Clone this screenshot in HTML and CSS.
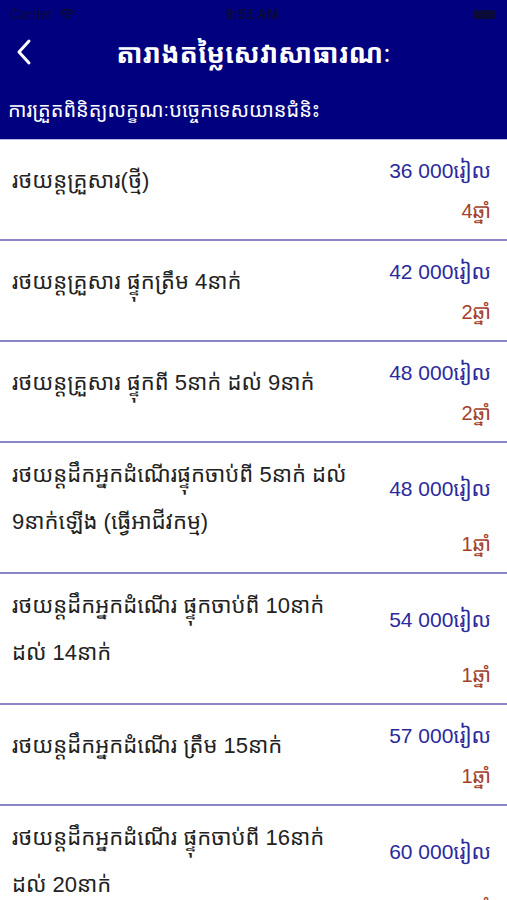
FILE: index.html
```html
<!DOCTYPE html>
<html lang="km">
<head>
    <meta charset="UTF-8">
    <meta name="viewport" content="width=device-width, initial-scale=1.0">
    <title>តារាងតម្លៃសេវាសាធារណៈ</title>
    <link rel="stylesheet" href="styles.css">
</head>
<body>
    <div class="header">
        <div class="status-bar">
            <div class="carrier">Carrier
                <svg class="wifi" width="16" height="12" viewBox="0 0 16 12">
                    <path d="M8 11.5 L5.6 8.9 A3.4 3.4 0 0 1 10.4 8.9 Z" fill="#0b0b3a"/>
                    <path d="M3.6 6.8 A6.4 6.4 0 0 1 12.4 6.8" fill="none" stroke="#0b0b3a" stroke-width="2" stroke-linecap="round"/>
                    <path d="M1.2 4.2 A9.8 9.8 0 0 1 14.8 4.2" fill="none" stroke="#0b0b3a" stroke-width="2" stroke-linecap="round"/>
                </svg>
            </div>
            <div class="clock">9:51 AM</div>
            <div class="battery"><span class="battery-fill"></span></div>
        </div>
        <div class="nav-bar">
            <svg class="back" width="18" height="28" viewBox="0 0 18 28">
                <path d="M14 3 L4 14 L14 25" fill="none" stroke="#ffffff" stroke-width="3" stroke-linecap="round" stroke-linejoin="round"/>
            </svg>
            <h1 class="title">តារាងតម្លៃសេវាសាធារណៈ</h1>
        </div>
        <div class="subtitle">ការត្រួតពិនិត្យលក្ខណៈបច្ចេកទេសយានជំនិះ</div>
    </div>

    <div class="list">
        <div class="row">
            <div class="label">រថយន្តគ្រួសារ(ថ្មី)</div>
            <div class="right">
                <div class="price">36 000រៀល</div>
                <div class="years">4ឆ្នាំ</div>
            </div>
        </div>
        <div class="row">
            <div class="label">រថយន្តគ្រួសារ ផ្ទុកត្រឹម 4នាក់</div>
            <div class="right">
                <div class="price">42 000រៀល</div>
                <div class="years">2ឆ្នាំ</div>
            </div>
        </div>
        <div class="row">
            <div class="label">រថយន្តគ្រួសារ ផ្ទុកពី 5នាក់ ដល់ 9នាក់</div>
            <div class="right">
                <div class="price">48 000រៀល</div>
                <div class="years">2ឆ្នាំ</div>
            </div>
        </div>
        <div class="row">
            <div class="label">រថយន្តដឹកអ្នកដំណើរផ្ទុកចាប់ពី 5នាក់ ដល់ 9នាក់ឡើង (ធ្វើអាជីវកម្ម)</div>
            <div class="right">
                <div class="price">48 000រៀល</div>
                <div class="years">1ឆ្នាំ</div>
            </div>
        </div>
        <div class="row">
            <div class="label">រថយន្តដឹកអ្នកដំណើរ ផ្ទុកចាប់ពី 10នាក់ ដល់ 14នាក់</div>
            <div class="right">
                <div class="price">54 000រៀល</div>
                <div class="years">1ឆ្នាំ</div>
            </div>
        </div>
        <div class="row">
            <div class="label">រថយន្តដឹកអ្នកដំណើរ ត្រឹម 15នាក់</div>
            <div class="right">
                <div class="price">57 000រៀល</div>
                <div class="years">1ឆ្នាំ</div>
            </div>
        </div>
        <div class="row">
            <div class="label">រថយន្តដឹកអ្នកដំណើរ ផ្ទុកចាប់ពី 16នាក់ ដល់ 20នាក់</div>
            <div class="right">
                <div class="price">60 000រៀល</div>
                <div class="years">1ឆ្នាំ</div>
            </div>
        </div>
    </div>
</body>
</html>
```

FILE: styles.css
```css
body {
    margin: 0;
    font-family: "Liberation Sans", "Noto Sans Khmer", "Khmer OS", sans-serif;
    background-color: #ffffff;
    color: #222222;
}
.header {
    background-color: #01007f;
    height: 140px;
    border-bottom: 1px solid #b9b7e6;
    box-sizing: border-box;
}
.status-bar {
    height: 28px;
    display: flex;
    align-items: center;
    justify-content: space-between;
    padding: 0 12px 0 10px;
    font-size: 14px;
    color: #0b0b3a;
}
.carrier {
    display: flex;
    align-items: center;
    gap: 6px;
    width: 120px;
}
.clock {
    font-weight: bold;
}
.battery {
    width: 120px;
    display: flex;
    justify-content: flex-end;
}
.battery-fill {
    display: block;
    width: 22px;
    height: 9px;
    background-color: #0b0b3a;
    border-radius: 2px;
}
.nav-bar {
    height: 48px;
    display: flex;
    align-items: center;
    padding-left: 15px;
}
.back {
    display: block;
}
.title {
    flex: 1;
    margin: 0 0 0 -33px;
    text-align: center;
    color: #ffffff;
    font-size: 27px;
    font-weight: bold;
}
.subtitle {
    color: #ffffff;
    font-size: 20px;
    line-height: 28px;
    padding: 20px 8px 0;
}
.row {
    display: flex;
    min-height: 101px;
    border-bottom: 2px solid #8a87c4;
    box-sizing: border-box;
    padding: 0 16px 0 12px;
}
.label {
    flex: 1;
    align-self: center;
    font-size: 22px;
    line-height: 47px;
    padding: 8px 26px 27px 0;
}
.right {
    display: flex;
    flex-direction: column;
    align-items: flex-end;
    padding-bottom: 16px;
}
.price {
    margin: auto 0;
    color: #2b2a9c;
    font-size: 21px;
    white-space: nowrap;
}
.years {
    color: #a3412b;
    font-size: 20px;
    line-height: 24px;
}
```
